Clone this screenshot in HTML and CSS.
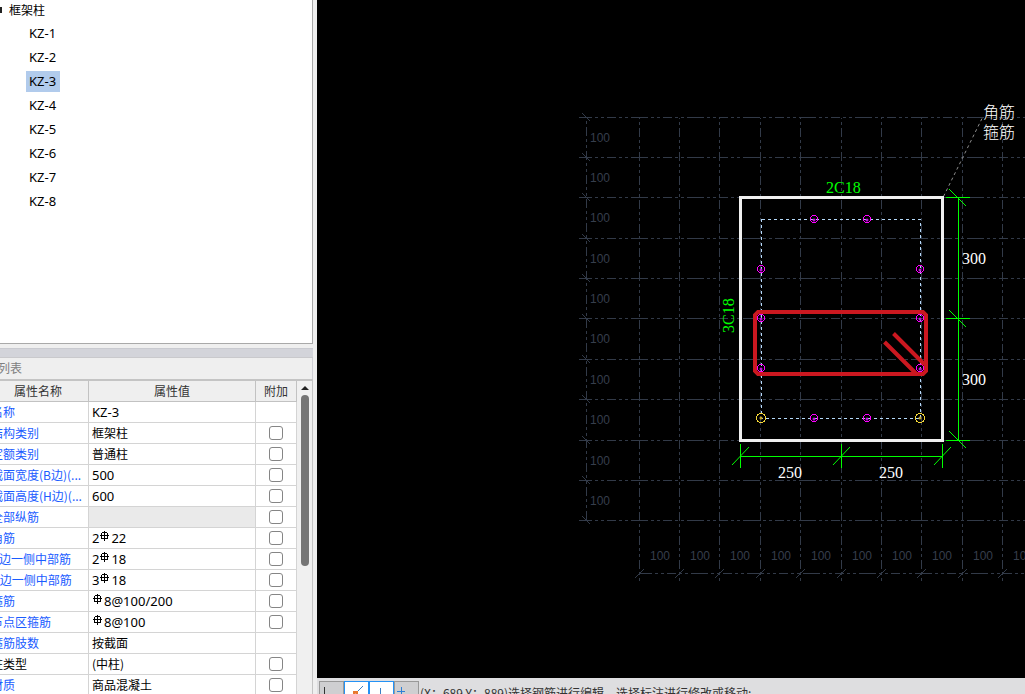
FILE: index.html
```
<!DOCTYPE html>
<html lang="zh-CN">
<head>
<meta charset="utf-8">
<title>截面编辑</title>
<link rel="stylesheet" href="styles.css">
</head>
<body>
<div class="app">
  <aside class="sidebar">
    <nav class="tree">
      <div class="tree-root"><svg class="caret" width="6" height="6"><path d="M6 0V6H0V3L3 0Z"/></svg>框架柱</div>
      <ul class="tree-list" id="tree"></ul>
    </nav>
    <div class="splitter"></div>
    <h2 class="panel-title">属性列表</h2>
    <div class="props">
      <table class="grid">
        <colgroup><col class="c-name"><col class="c-value"><col class="c-extra"></colgroup>
        <thead><tr><th>属性名称</th><th>属性值</th><th>附加</th></tr></thead>
        <tbody id="rows"></tbody>
      </table>
      <div class="scroll"><svg width="8" height="4"><path d="M0 4L4 0L8 4Z"/></svg><div class="thumb"></div></div>
    </div>
  </aside>
  <main class="work">
    <svg class="canvas" id="canvas" viewBox="317 0 708 678" preserveAspectRatio="xMinYMin meet">
      <g id="axes" class="axes"></g>
      <path class="leader" d="M943.5 196.5L982.5 117.5"/>
      <rect class="column" x="740.5" y="197.5" width="202" height="243"/>
      <rect class="stirrup" x="761.5" y="219.5" width="159" height="199"/>
      <g class="dim">
        <path d="M958.5 197V440M946 197.5H970M946 318.5H970M946 440.5H970M740 456.5H943M740.5 444V468M841.5 444V468M942.5 444V468"/>
        <path d="M949 189L966 206M949 310L966 327M949 431L966 448M732 465L749 447M833 465L850 447M934 465L951 447"/>
      </g>
      <g id="bars"></g>
      <g class="tie">
        <path d="M758 312H923L926 315V371L923 374H758L755 371V315Z"/>
        <path d="M893.5 333.5L924.5 364.5M884.5 342L916 373.5"/>
      </g>
      <g class="label green">
        <text x="826" y="193">2C18</text>
        <text transform="translate(734 333) rotate(-90)">3C18</text>
      </g>
      <g class="label">
        <text x="962" y="264">300</text><text x="962" y="385">300</text>
        <text x="778" y="478">250</text><text x="879" y="478">250</text>
        <text x="983" y="118">角筋</text><text x="983" y="138">箍筋</text>
      </g>
    </svg>
    <footer class="status">
      <button class="tool" aria-label="正交"><svg width="22" height="22"><path d="M4.5 4V18H18" stroke="#333"/></svg></button>
      <button class="tool on" aria-label="端点"><svg width="22" height="22"><path d="M10 11L18 3" stroke="#3a7fc4"/><path d="M9 9H12V12H9Z" stroke="#e8772e" fill="#f59a5c" stroke-width="2"/></svg></button>
      <button class="tool on" aria-label="垂点"><svg width="22" height="22"><path d="M10.5 5V17M4 17.5H18" stroke="#3a7fc4"/></svg></button>
      <button class="tool" aria-label="交点"><svg width="22" height="22"><path d="M2 8.5H10M6.5 4V13" stroke="#2f7fd6"/></svg></button>
      <span class="hint">(X：689 Y：889)选择钢筋进行编辑，选择标注进行修改或移动;</span>
    </footer>
  </main>
</div>
<script src="app.js"></script>
</body>
</html>
```
FILE: styles.css
```
* { box-sizing: border-box; }
body { margin: 0; height: 100vh; overflow: hidden; background: #efefef; color: #000;
  font: 12px "Noto Sans CJK SC", sans-serif; }
.app { display: flex; height: 100vh; overflow: hidden; }
.sidebar { flex: 0 0 347px; margin-left: -30px; padding-right: 4px; display: flex; flex-direction: column; overflow: hidden; }
.tree { flex: 0 0 344px; background: #fff; border-right: 1px solid #a9a9a9; border-bottom: 1px solid #a9a9a9; padding-left: 26px; }
.tree-root { display: flex; align-items: center; gap: 7px; line-height: 20px; height: 20px; }
.caret { fill: #222; }
.tree-list { list-style: none; margin: 0; padding: 1px 0 0 30px; }
.tree-list li { height: 24px; display: flex; align-items: center; }
.tree-list a { font: 13px/20px "Noto Sans", sans-serif; color: #000; text-decoration: none; padding: 0 4px 0 3px; height: 21px; }
.tree-list a.sel { background: #b1cbec; }
.splitter { flex: 0 0 10px; margin-top: 4px; background: #d3d4da; border-top: 1px solid #c9cad0; border-bottom: 1px solid #c9c9cc; }
.panel-title { margin: 0; padding-left: 4px; flex: 0 0 21px; font-size: 12px; font-weight: 400; line-height: 20px; color: #808080; border-right: 1px solid #cfcfd4; }
.props { flex: 1; min-height: 0; display: flex; border-top: 2px solid #c4c4c4; border-right: 1px solid #c4c4c4; padding-left: 18px; background: #f0f0f0; overflow: hidden; }
.grid { flex: 0 0 309px; width: 309px; align-self: flex-start; table-layout: fixed; border-collapse: separate; border-spacing: 0; background: #fff; }
.c-name { width: 101px; }
.c-value { width: 167px; }
.c-extra { width: 41px; }
.grid th { height: 21px; padding: 0; background: #efefef; font-weight: 400; line-height: 18px; color: #333; border-right: 1px solid #c2c2c2; border-bottom: 1px solid #c2c2c2; }
.grid td { height: 21px; padding: 0 0 0 3px; line-height: 18px; white-space: nowrap; overflow: hidden; border-right: 1px solid #d4d4d4; border-bottom: 1px solid #d4d4d4; }
.grid .name { color: #1a5cff; }
.grid .name.plain { color: #000; }
.grid .num { font: 13px/18px "Noto Sans", sans-serif; }
.grid .locked { background: #eaeaea; }
.grid .pick { padding: 0; text-align: center; }
.pick input { appearance: none; display: block; width: 14px; height: 14px; margin: 0 auto; border: 1px solid #858585; border-radius: 3px; background: #fff; }
.rebar { width: 10px; height: 11px; margin: 0 1px; vertical-align: 1px; fill: none; stroke: #000; }
.scroll { flex: 1; display: flex; flex-direction: column; align-items: center; padding-top: 5px; gap: 5px; }
.scroll svg { flex: none; fill: #222; }
.thumb { width: 8px; height: 171px; border-radius: 4px; background: #757575; flex: none; }

.work { flex: 1; min-width: 0; display: flex; flex-direction: column; background: #000; }
.canvas { flex: 1; min-height: 0; width: 100%; display: block; fill: none; }
.axes { stroke: #323a48; }
.axes .h { stroke-dasharray: 17 3 3 3 3 3 9 3 3 3 3 3; stroke-dashoffset: 4; }
.axes .v { stroke-dasharray: 9 3 3 3 3 3; stroke-dashoffset: 14; }
.axes text { font: 12px "Liberation Sans", sans-serif; fill: #363e4c; stroke: none; }
.leader { stroke: #8c8c8c; stroke-dasharray: 3 3; }
.column { stroke: #f0f0f0; stroke-width: 3; }
.stirrup { stroke: #b4d8f8; stroke-dasharray: 3 3; shape-rendering: crispEdges; }
.dim { stroke: #0f0; }
.tie { stroke: #cb1820; stroke-width: 4; }
.bar { stroke: #f0f; shape-rendering: crispEdges; }
.bar-core { fill: #c010e0; }
.corner { stroke: #f5d838; shape-rendering: crispEdges; }
.corner-core { fill: #c8a828; }
.label { fill: #fff; font: 16px "Liberation Serif", "Noto Sans CJK SC", serif; font-weight: 300; }
.label.green { fill: #0f0; }
.status { flex: 0 0 16px; height: 16px; display: flex; align-items: flex-start; background: #dedee0; padding: 3px 0 0 2px; overflow: hidden; }
.tool { flex: none; width: 25px; height: 25px; padding: 0; border: 1px solid #999; background: #cfcfd1; }
.tool.on { background: #fff; border-color: #2492f5; }
.tool svg { display: block; fill: none; }
.hint { padding-left: 1px; line-height: 24px; white-space: nowrap; color: #333; }
```
FILE: app.js
```
const tree = document.getElementById('tree');
for (let i = 1; i <= 8; i++) {
  tree.insertAdjacentHTML('beforeend', `<li><a href="#kz${i}"${i === 3 ? ' class="sel"' : ''}>KZ-${i}</a></li>`);
}

const rebar = '<svg class="rebar" viewBox="0 0 10 11"><path d="M4.5 0V10M0 4.5H9M1 7.5H8"/><path d="M2 1.5H7M1.5 2V7M7.5 2V7"/></svg>';
const rows = [
  ['名称', 'KZ-3', 'num', false],
  ['结构类别', '框架柱', '', true],
  ['定额类别', '普通柱', '', true],
  ['截面宽度(B边)(...', '500', 'num', true],
  ['截面高度(H边)(...', '600', 'num', true],
  ['全部纵筋', '', 'locked', true],
  ['角筋', '2' + rebar + '22', 'num', true],
  ['B边一侧中部筋', '2' + rebar + '18', 'num', true],
  ['H边一侧中部筋', '3' + rebar + '18', 'num', true],
  ['箍筋', rebar + '8@100/200', 'num', true],
  ['节点区箍筋', rebar + '8@100', 'num', true],
  ['箍筋肢数', '按截面', '', false],
  ['柱类型', '(中柱)', '', true],
  ['材质', '商品混凝土', '', true]
];
document.getElementById('rows').innerHTML = rows.map(([name, value, kind, pick]) =>
  `<tr><td class="name${name === '柱类型' ? ' plain' : ''}">${name}</td><td class="${kind}">${value}</td>` +
  `<td class="pick">${pick ? `<input type="checkbox" aria-label="${name}">` : ''}</td></tr>`).join('');

const xs = [639, 679, 719, 760, 800, 841, 881, 921, 962, 1002];
const ys = [117, 157, 197, 238, 278, 318, 359, 399, 440, 480, 520];
let g = '';
ys.forEach((y, i) => {
  g += `<path class="h" d="M579 ${y}.5H1025"/><path d="M582 ${y - 4}L590 ${y + 4}"/>`;
  if (i < 10) g += `<text x="590" y="${y + 25}">100</text>`;
});
xs.forEach(x => {
  g += `<path class="v" d="M${x}.5 118V581"/><path d="M${x - 4} 578L${x + 5} 569"/><text x="${x + 11}" y="560">100</text>`;
});
g += '<path class="v" d="M586.5 117V521"/><path class="h" d="M639 573.5H1025"/>';
document.getElementById('axes').innerHTML = g;

const bars = [[814, 219], [867, 219], [761, 269], [920, 269], [761, 318], [920, 318], [761, 368], [920, 368], [814, 418], [867, 418]];
document.getElementById('bars').innerHTML =
  bars.map(([x, y]) => `<circle class="bar" cx="${x}" cy="${y}" r="3.5"/><circle class="bar-core" cx="${x}" cy="${y + 1}" r="1.5"/>`).join('') +
  [761, 920].map(x => `<circle class="corner" cx="${x}" cy="418" r="4.5"/><circle class="corner-core" cx="${x}" cy="418" r="1.5"/>`).join('');
```
